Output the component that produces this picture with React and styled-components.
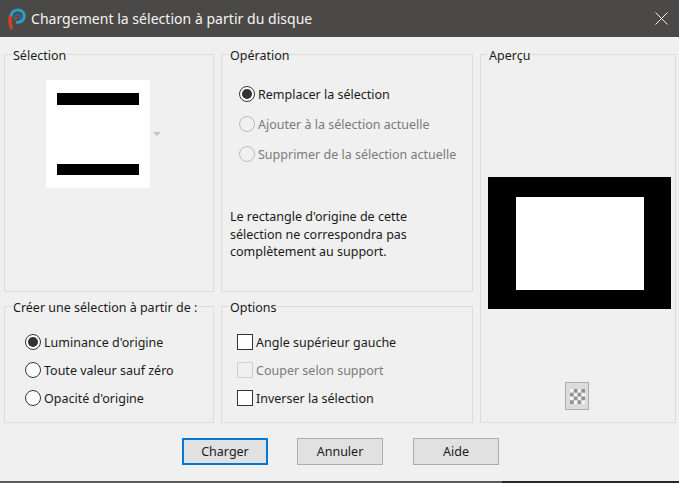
import React from "react";
import styled, { createGlobalStyle } from "styled-components";

const GlobalStyle = createGlobalStyle`
  html, body {
    margin: 0;
    padding: 0;
    background: #f0f0f0;
  }
`;

const Dialog = styled.div`
  width: 679px;
  height: 483px;
  overflow: hidden;
  display: flex;
  flex-direction: column;
  background: #f0f0f0;
  font-family: "Noto Sans", "Open Sans", sans-serif;
  font-size: 12.5px;
  color: #1a1a1a;
`;

const TitleBar = styled.div`
  height: 37px;
  flex: none;
  display: flex;
  align-items: center;
  padding: 0 11px 0 7px;
  background: #4b4947;
  color: #f4f4f4;
  font-size: 14px;
  letter-spacing: 0.03px;
`;

const TitleText = styled.span`
  flex: 1;
  margin-left: 5px;
`;

const Panels = styled.div`
  display: grid;
  grid-template-columns: 210px 252px 196px;
  grid-template-rows: 248px 127px;
  column-gap: 7px;
  row-gap: 4px;
  padding: 7px 4px 0;
`;

const Group = styled.fieldset`
  margin: 0;
  min-width: 0;
  padding: 0;
  border: 1px solid #dcdcdc;
  grid-column: ${(p) => p.$col};
  grid-row: ${(p) => p.$rows};
  display: flex;
  flex-direction: column;
`;

const Legend = styled.legend`
  margin-left: 7px;
  padding: 4px 1px 0;
  line-height: 16px;
`;

const SelectionBody = styled.div`
  display: flex;
  align-items: center;
  padding: 16px 0 0 41px;
`;

const Thumb = styled.div`
  width: 104px;
  height: 108px;
  background: #fff;
  padding: 13px 11px;
  box-sizing: border-box;
  display: flex;
  flex-direction: column;
  justify-content: space-between;
`;

const ThumbBar = styled.div`
  height: 12px;
  background: #000;

  &:last-child {
    height: 11px;
  }
`;

const DownArrow = styled.div`
  width: 0;
  height: 0;
  margin: 0 0 0 3px;
  border: 4px solid transparent;
  border-top: 4px solid #c4c4c4;
  border-bottom: 0;
`;

const OptionList = styled.div`
  display: flex;
  flex-direction: column;
  gap: ${(p) => p.$gap}px;
  padding: ${(p) => p.$pad};
`;

const Option = styled.label`
  display: flex;
  align-items: center;
  height: 16px;
  white-space: nowrap;
  color: ${(p) => (p.$off ? "#7a7a7a" : "#1a1a1a")};
`;

const Radio = styled.span`
  width: 16px;
  height: 16px;
  box-sizing: border-box;
  flex: none;
  margin-right: 3px;
  border-radius: 50%;
  border: 1px solid ${(p) => (p.$off ? "#bcbcbc" : "#333")};
  background: ${(p) => (p.$off ? "#f0f0f0" : "#fff")};
  display: flex;
  align-items: center;
  justify-content: center;

  &::after {
    content: "";
    display: ${(p) => (p.$on ? "block" : "none")};
    width: 10px;
    height: 10px;
    border-radius: 50%;
    background: #333;
  }
`;

const Check = styled.span`
  width: 16px;
  height: 16px;
  box-sizing: border-box;
  flex: none;
  margin-right: 3px;
  border: 1px solid ${(p) => (p.$off ? "#cfcfcf" : "#333")};
  background: ${(p) => (p.$off ? "#f0f0f0" : "#fff")};
`;

const Note = styled.p`
  margin: 0;
  padding: 46px 0 0 8px;
  width: 200px;
  line-height: 17.5px;
`;

const PreviewBody = styled.div`
  flex: 1;
  display: flex;
  flex-direction: column;
  align-items: flex-start;
  padding: 113px 0 0;
`;

const PreviewFrame = styled.div`
  width: 183px;
  height: 132px;
  margin-left: 7px;
  background: #000;
  padding: 20px 27px 19px 28px;
  box-sizing: border-box;
`;

const PreviewPage = styled.div`
  width: 100%;
  height: 100%;
  background: #fff;
`;

const AlphaButton = styled.button`
  width: 24px;
  height: 28px;
  margin: 73px 0 0 84px;
  padding: 0;
  border: 1px solid #adadad;
  background: #dcdcdc;
  display: flex;
  align-items: center;
  justify-content: center;
`;

const Footer = styled.div`
  display: flex;
  padding: 15px 0 0 182px;
  gap: 29px;
`;

const PushButton = styled.button`
  width: 86px;
  height: 27px;
  padding: 0;
  box-sizing: border-box;
  font: inherit;
  color: #1a1a1a;
  background: #e1e1e1;
  border: ${(p) => (p.$primary ? "2px solid #0078d7" : "1px solid #adadad")};

  &:last-child {
    margin-left: 1px;
  }
`;

const BottomStrip = styled.div`
  margin-top: auto;
  height: 2px;
  flex: none;
  background: linear-gradient(90deg, #5c5c5c 0 74%, #26282c 74% 100%);
`;

const Logo = () => (
  <svg width="19" height="22" viewBox="0 0 19 22">
    <path d="M4 9 C4 4 8 1.5 12 2 C16 2.5 18 6 17 10 C16 13.5 12 15 9 14" stroke="#2f9cc4" strokeWidth="3" fill="none" />
    <path d="M7 11 C7 7.5 9.5 6 12 7 C14 8 14 10.5 12 11" stroke="#2a6f96" strokeWidth="2" fill="none" />
    <path d="M3.5 8 C2.5 12 3 17 5 21" stroke="#c9442b" strokeWidth="3.5" fill="none" />
    <path d="M7 12 C9 10 10.5 9.5 11 9" stroke="#b8412d" strokeWidth="1.5" fill="none" />
  </svg>
);

const CloseIcon = () => (
  <svg width="13" height="13" viewBox="0 0 13 13">
    <path d="M0.5 0.5 L12.5 12.5 M12.5 0.5 L0.5 12.5" stroke="#f4f4f4" strokeWidth="1" fill="none" />
  </svg>
);

const Checker = () => {
  const cells = [];
  for (let y = 0; y < 4; y++) {
    for (let x = 0; x < 4; x++) {
      if ((x + y) % 2 === 1) cells.push(<rect key={x + "-" + y} x={x * 4} y={y * 4} width="4" height="4" fill="#929292" />);
    }
  }
  return (
    <svg width="15" height="15" viewBox="0 0 16 16">
      <rect width="16" height="16" fill="#f4f4f4" />
      {cells}
    </svg>
  );
};

export default function App() {
  return (
    <Dialog>
      <GlobalStyle />
      <TitleBar>
        <Logo />
        <TitleText>Chargement la sélection à partir du disque</TitleText>
        <CloseIcon />
      </TitleBar>
      <Panels>
        <Group $col="1" $rows="1">
          <Legend>Sélection</Legend>
          <SelectionBody>
            <Thumb>
              <ThumbBar />
              <ThumbBar />
            </Thumb>
            <DownArrow />
          </SelectionBody>
        </Group>
        <Group $col="2" $rows="1">
          <Legend>Opération</Legend>
          <OptionList $gap={14} $pad="22px 0 0 17px">
            <Option>
              <Radio $on />
              Remplacer la sélection
            </Option>
            <Option $off>
              <Radio $off />
              Ajouter à la sélection actuelle
            </Option>
            <Option $off>
              <Radio $off />
              Supprimer de la sélection actuelle
            </Option>
          </OptionList>
          <Note>Le rectangle d'origine de cette sélection ne correspondra pas complètement au support.</Note>
        </Group>
        <Group $col="3" $rows="1 / span 2">
          <Legend>Aperçu</Legend>
          <PreviewBody>
            <PreviewFrame>
              <PreviewPage />
            </PreviewFrame>
            <AlphaButton>
              <Checker />
            </AlphaButton>
          </PreviewBody>
        </Group>
        <Group $col="1" $rows="2">
          <Legend>Créer une sélection à partir de :</Legend>
          <OptionList $gap={12} $pad="18px 0 0 20px">
            <Option>
              <Radio $on />
              Luminance d'origine
            </Option>
            <Option>
              <Radio />
              Toute valeur sauf zéro
            </Option>
            <Option>
              <Radio />
              Opacité d'origine
            </Option>
          </OptionList>
        </Group>
        <Group $col="2" $rows="2">
          <Legend>Options</Legend>
          <OptionList $gap={12} $pad="18px 0 0 15px">
            <Option>
              <Check />
              Angle supérieur gauche
            </Option>
            <Option $off>
              <Check $off />
              Couper selon support
            </Option>
            <Option>
              <Check />
              Inverser la sélection
            </Option>
          </OptionList>
        </Group>
      </Panels>
      <Footer>
        <PushButton $primary>Charger</PushButton>
        <PushButton>Annuler</PushButton>
        <PushButton>Aide</PushButton>
      </Footer>
      <BottomStrip />
    </Dialog>
  );
}
